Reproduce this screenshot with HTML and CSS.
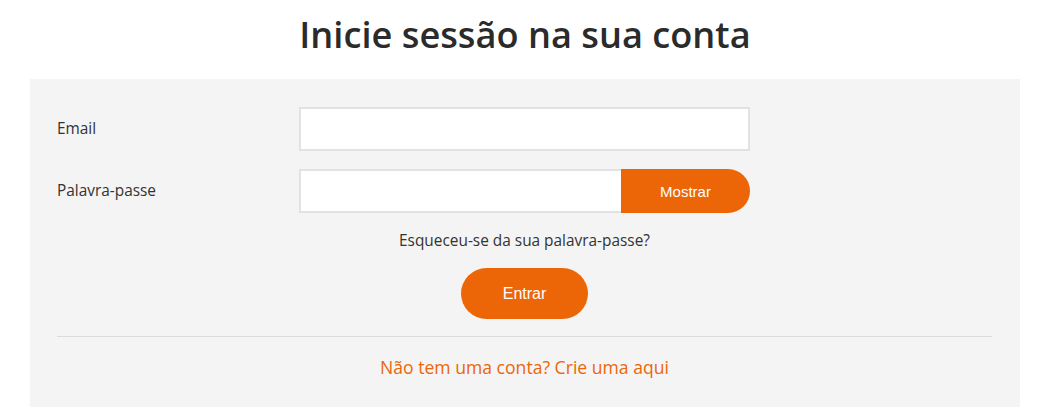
FILE: index.html
```html
<!DOCTYPE html>
<html lang="pt">
<head>
<meta charset="utf-8">
<title>Inicie sessão</title>
<link rel="stylesheet" href="styles.css">
</head>
<body>
<div class="page">
  <h1 class="title">Inicie sessão na sua conta</h1>
  <div class="panel">
    <form class="form">
      <div class="row">
        <label class="label" for="email">Email</label>
        <input class="input" id="email" type="email">
      </div>
      <div class="row">
        <label class="label" for="pw">Palavra-passe</label>
        <div class="pw-group">
          <input class="input pw-input" id="pw" type="password">
          <button type="button" class="show-btn">Mostrar</button>
        </div>
      </div>
      <div class="forgot"><a href="#">Esqueceu-se da sua palavra-passe?</a></div>
      <div class="submit-wrap"><button type="button" class="submit">Entrar</button></div>
    </form>
    <hr class="divider">
    <div class="create"><a href="#">Não tem uma conta? Crie uma aqui</a></div>
  </div>
</div>
</body>
</html>
```
FILE: styles.css
```css
* { box-sizing: border-box; }
html, body { margin: 0; padding: 0; background: #fff; }
body { font-family: "Open Sans", "Noto Sans", sans-serif; color: #333; }
.page { width: 990px; margin-left: 30px; }
.title {
  margin: 0;
  padding-top: 10px;
  height: 79px;
  text-align: center;
  font-size: 36.2px;
  font-weight: 600;
  color: #2b2b2b;
  line-height: 48px;
}
.panel { background: #f4f4f4; padding: 28px 28px 29px 27px; }
.row { display: grid; grid-template-columns: 242px 451px; align-items: center; margin-bottom: 18px; }
.label { font-size: 15.4px; color: #333; line-height: 20px; }
.input {
  display: block;
  width: 451px;
  height: 44px;
  border: 2px solid #e2e2e2;
  background: #fff;
  margin: 0;
  padding: 0 10px;
  font: inherit;
  outline: none;
}
.pw-group { display: flex; width: 451px; }
.pw-input { width: 322px; border-right: none; }
.show-btn {
  width: 129px;
  height: 44px;
  border: none;
  margin: 0;
  background: #ec6608;
  color: #fff;
  font-family: "Liberation Sans", Arial, sans-serif;
  font-size: 15px;
  border-radius: 0 22px 22px 0;
  padding: 0;
}
.forgot { text-align: center; font-size: 15.4px; line-height: 20px; margin-top: 0; }
.forgot a { color: #333; text-decoration: none; }
.submit-wrap { text-align: center; margin-top: 17px; }
.submit {
  width: 127px;
  height: 51px;
  border: none;
  border-radius: 26px;
  background: #ec6608;
  color: #fff;
  font-family: "Liberation Sans", Arial, sans-serif;
  font-size: 16px;
  padding: 0;
}
.divider { border: none; border-top: 1px solid #dcdcdc; margin: 17px 0 0 0; }
.create { text-align: center; font-size: 17.6px; line-height: 22px; margin-top: 19px; }
.create a { color: #ec6608; text-decoration: none; }
```
